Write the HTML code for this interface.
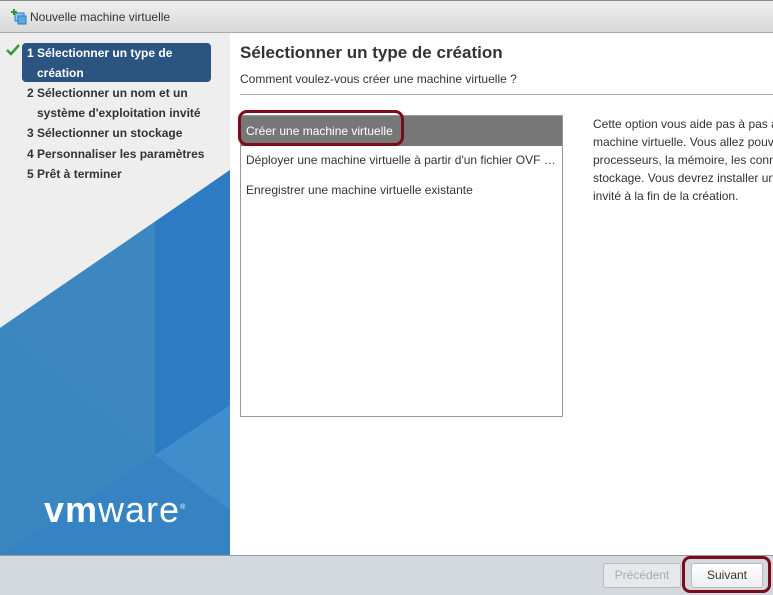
<!DOCTYPE html>
<html><head><meta charset="utf-8"><style>
*{margin:0;padding:0;box-sizing:border-box}
body{width:773px;height:595px;overflow:hidden;background:#fff;font-family:"Liberation Sans",Arial,sans-serif;position:relative;color:#333}
.title{position:absolute;left:0;top:0;width:773px;height:33px;background:linear-gradient(#f0f0f0,#d8d8d8);border-top:1px solid #888;border-bottom:1px solid #aaa}
.title span{position:absolute;left:30px;top:9px;font-size:12px;color:#333}
.left{position:absolute;left:0;top:33px;width:230px;height:522px;background:#eeeeee;overflow:hidden}
.step{position:absolute;left:27px;font-size:12px;font-weight:bold;color:#333;line-height:20px}
.sel{position:absolute;left:22px;top:10px;width:189px;height:39px;background:#2c5480;border-radius:4px}
.h1{position:absolute;left:240px;top:43px;font-size:17px;font-weight:bold;color:#333}
.sub{position:absolute;left:240px;top:72px;font-size:12px;color:#333}
.hr{position:absolute;left:240px;top:94px;width:533px;height:1px;background:#aaa}
.list{position:absolute;left:240px;top:115px;width:323px;height:302px;border:1px solid #999}
.row{position:absolute;left:5px;font-size:12px;color:#333}
.desc{position:absolute;left:593px;top:115px;font-size:12px;line-height:18px;color:#333;white-space:nowrap}
.foot{position:absolute;left:0;top:555px;width:773px;height:40px;background:#d3d9df;border-top:1px solid #999}
.btn{position:absolute;top:563px;height:25px;border:1px solid #bbb;border-radius:3px;font-size:12px;text-align:center;line-height:23px}
</style></head><body>
<div class="title">
<svg style="position:absolute;left:10px;top:7px" width="17" height="17" viewBox="0 0 17 17"><rect x="5" y="5" width="9" height="8" fill="#8cc8ee" stroke="#2a7ac0"/><rect x="8" y="8" width="8" height="8" fill="#5aa9e0" stroke="#2a7ac0"/><path d="M4 1v6M1 4h6" stroke="#2d9a2d" stroke-width="2"/></svg>
<span>Nouvelle machine virtuelle</span></div>
<div class="left">
<svg style="position:absolute;left:0;top:0" width="230" height="522" viewBox="0 33 230 522">
<polygon points="230,170 0,328 0,555 230,555" fill="#3a86c4"/>
<polygon points="155,222 230,170 230,555 155,555" fill="#2c7bc3"/>
<polygon points="0,328 155,222 155,455" fill="#3c87c0"/>
<polygon points="0,328 155,455 0,555" fill="#3a86c0"/>
<polygon points="155,455 230,405 230,555 155,555" fill="#3f8dca"/>
<polygon points="0,555 155,455 230,510 230,555" fill="#3583c2"/>
</svg>
<svg style="position:absolute;left:6px;top:11px" width="14" height="12"><path d="M1 6l4 4 8-9" stroke="#3a9a3a" stroke-width="2.5" fill="none"/></svg>
<div class="sel"></div>
<div class="step" style="top:10px;color:#fff">1&nbsp;Sélectionner un type de<br>&nbsp;&nbsp;&nbsp;création</div>
<div class="step" style="top:50px">2&nbsp;Sélectionner un nom et un<br>&nbsp;&nbsp;&nbsp;système d'exploitation invité</div>
<div class="step" style="top:90px">3&nbsp;Sélectionner un stockage</div>
<div class="step" style="top:111px">4&nbsp;Personnaliser les paramètres</div>
<div class="step" style="top:131px">5&nbsp;Prêt à terminer</div>
<div style="position:absolute;left:44px;top:456px;color:#fff;font-size:36px;letter-spacing:1px"><b style="font-weight:900">vm</b>ware<sup style="font-size:7px">®</sup></div>
</div>
<div class="h1">Sélectionner un type de création</div>
<div class="sub">Comment voulez-vous créer une machine virtuelle ?</div>
<div class="hr"></div>
<div class="list">
<div style="position:absolute;left:0;top:0;width:321px;height:30px;background:#777"></div>
<div class="row" style="top:8px;color:#fff">Créer une machine virtuelle</div>
<div class="row" style="top:37px">Déployer une machine virtuelle à partir d'un fichier OVF …</div>
<div class="row" style="top:67px">Enregistrer une machine virtuelle existante</div>
</div>
<div style="position:absolute;left:238px;top:110px;width:166px;height:36px;border:3px solid #7a0b1c;border-radius:9px"></div>
<div class="desc">Cette option vous aide pas à pas à<br>machine virtuelle. Vous allez pouv<br>processeurs, la mémoire, les conn<br>stockage. Vous devrez installer un<br>invité à la fin de la création.</div>
<div class="foot"></div>
<div class="btn" style="left:603px;width:78px;color:#aaa;background:#e6e9ec">Précédent</div>
<div class="btn" style="left:691px;width:72px;color:#333;background:linear-gradient(#fff,#eee)">Suivant</div>
<div style="position:absolute;left:682px;top:556px;width:89px;height:37px;border:3px solid #7a0b1c;border-radius:8px"></div>
</body></html>
